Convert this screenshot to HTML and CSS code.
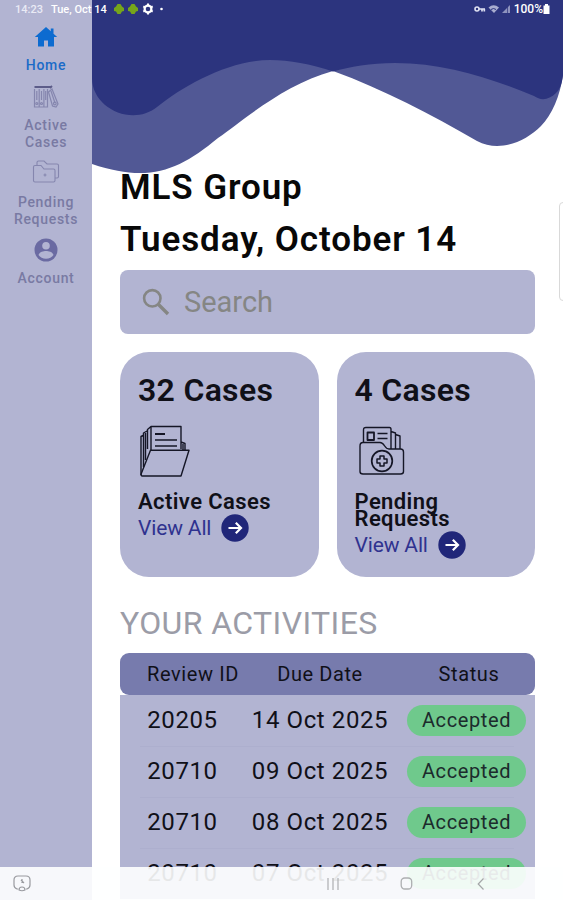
FILE: index.html
```html
<!DOCTYPE html>
<html lang="en">
<head>
<meta charset="utf-8">
<title>MLS Group</title>
<link rel="stylesheet" href="styles.css">
</head>
<body>
<div class="app">
  <nav class="sidebar">
    <a class="nav-item active">
      <svg class="ico-home" width="24" height="22" viewBox="0 0 24 22"><path d="M12 1 0.800 11H4v9.500h6v-6h4v6h6V11h3.200L19.500 7.700V2.500h-2.700v2.800z" fill="#0d6bd0"/></svg>
      <span>Home</span>
    </a>
    <a class="nav-item cases">
      <svg width="28" height="26" viewBox="0 0 28 26" fill="none" stroke="#8586ae" stroke-width="1.200"><path d="M2.500 3h17M20 2l-2 2" stroke="#5c5c89" stroke-width="1.800"/><path d="M2.500 5v18h4.700V5M7.200 5v18h4.700V5M11.900 5v18h3.600V5M4.800 7v9M9.500 7v9M13.700 7v9M16.500 8l3.500-3 6 15-2 3-3.500-1zM19 7l4 12"/><circle cx="4.800" cy="19.500" r="1"/><circle cx="9.500" cy="19.500" r="1"/><circle cx="22.800" cy="19.500" r="1.300"/></svg>
      <span>Active<br>Cases</span>
    </a>
    <a class="nav-item pending">
      <svg width="28" height="24" viewBox="0 0 28 24" fill="none" stroke="#8586ae" stroke-width="1.100"><path d="M1.500 7q0-1.500 1.500-1.500h6L12 9h9.500q1.500 0 1.500 1.500v10q0 1.500-1.500 1.500H3q-1.500 0-1.500-1.500zM5 5V2.500Q5 1 6.500 1H12l3 3h10q1.500 0 1.500 1.500v11q0 1.500-1.500 1.500h-1.500M13 13.500v3M11.500 15h3"/></svg>
      <span>Pending<br>Requests</span>
    </a>
    <a class="nav-item account">
      <svg width="24" height="24" viewBox="0 0 24 24"><circle cx="12" cy="12" r="11.500" fill="#6a6aa2"/><circle cx="12" cy="7.700" r="3.800" fill="#b2b4d2"/><path d="M4.500 17c1-3.200 5-4 7.500-4s6.500.8 7.500 4c-1.600 2.300-4.300 3.800-7.500 3.800S6.100 19.300 4.500 17z" fill="#b2b4d2"/></svg>
      <span>Account</span>
    </a>
  </nav>

  <main class="main">
    <svg class="wave" width="471" height="176" viewBox="92 0 471 176">
      <path d="M92 0H563V75C560 96 552 115 541 126C525 142 499 153 477 141C430 114 385 90 333 71C285 84 245 119 218 138C178 171 149 183 92 164Z" fill="#515895"/>
      <path d="M92 0H563V75C562 84 560 89 556 93C549 100 541 101 534 96C490 78 445 63 395 63C370 63 350 67 333 71.500C310 64 290 60 270 60C230 60 184 85 157 107C132 127 92 108 92 78Z" fill="#2c347e"/>
    </svg>
    <h1 class="title company">MLS Group</h1>
    <h1 class="title date">Tuesday, October 14</h1>

    <div class="search">
      <svg width="28" height="28" viewBox="0 0 28 28" fill="none" stroke="#858684" stroke-width="2.600"><circle cx="10.300" cy="10.300" r="8.200"/><path d="M16.500 16.500 26 26" stroke-width="3.400"/></svg>
      <span>Search</span>
    </div>

    <div class="cards">
      <section class="card">
        <h2>32 Cases</h2>
        <svg class="card-icon" width="52" height="54" viewBox="0 0 52 54" fill="none" stroke="#151626" stroke-width="1.400" stroke-linejoin="round"><path d="M3 50V11.500L6 10M5.500 42V8L9 6M9.500 24V4.500L13 1.500h30V24M13 2v23M7.500 8v27M43 17l4 1.500V25M45 19v6" /><path d="M12.500 25.300H51L43 51H4.500Q2.500 51 3.300 48.500z"/><path d="M17 9h10" stroke-width="2"/><path d="M17 15h22M17 21h22" stroke-width="1.600"/></svg>
        <h3>Active Cases</h3>
        <a class="view"><span>View All</span><svg width="28" height="28" viewBox="0 0 28 28"><circle cx="14" cy="14" r="13.700" fill="#202679"/><path d="M7.500 14h12M14.800 8.800l5.200 5.200-5.200 5.200" fill="none" stroke="#fff" stroke-width="2.200"/></svg></a>
      </section>
      <section class="card">
        <h2>4 Cases</h2>
        <svg class="card-icon" width="52" height="54" viewBox="0 0 52 54" fill="none" stroke="#151626" stroke-width="1.400" stroke-linejoin="round"><path d="M8.500 17V5Q8.500 2.500 11 2.500h23.500q1.500 0 1.500 2V24M36 6.500l4.500 1.500v16M40.500 9.500 45 11v13"/><path d="M5 21q0-3.500 3-3.500h17c5 0 4 6.500 9 6.500h11.500q3 0 3 3v19.500q0 2.500-3 2.500H8q-3 0-3-2.500z"/><rect x="12.500" y="7.500" width="6.500" height="7.500" stroke-width="1.800"/><path d="M22.500 8.500h10M22.500 13.500h10"/><circle cx="27" cy="36" r="10.300" stroke-width="1.700"/><path d="M25 31h4v3h3v4h-3v3h-4v-3h-3v-4h3z" stroke-width="1.500"/></svg>
        <h3>Pending<br>Requests</h3>
        <a class="view"><span>View All</span><svg width="28" height="28" viewBox="0 0 28 28"><circle cx="14" cy="14" r="13.700" fill="#202679"/><path d="M7.500 14h12M14.800 8.800l5.200 5.200-5.200 5.200" fill="none" stroke="#fff" stroke-width="2.200"/></svg></a>
      </section>
    </div>

    <h2 class="section-title">YOUR ACTIVITIES</h2>
    <div class="row head"><span class="id">Review ID</span><span>Due Date</span><span class="state">Status</span></div>
    <div class="rows">
      <div class="row"><span>20205</span><span>14 Oct 2025</span><b>Accepted</b></div>
      <div class="row"><span>20710</span><span>09 Oct 2025</span><b>Accepted</b></div>
      <div class="row"><span>20710</span><span>08 Oct 2025</span><b>Accepted</b></div>
      <div class="row"><span>20710</span><span>07 Oct 2025</span><b>Accepted</b></div>
    </div>
  </main>

  <header class="status">
    <span class="time">14:23</span><span class="day">Tue, Oct 14</span>
    <svg width="54" height="12" viewBox="0 0 54 12"><g fill="#76a51b"><path d="M1 5l2-1.500L4.500 1h3L9 3.500 11 5v3l-2 .5L7.500 11h-3L3 8.500 1 8z"/><path d="M15 5l2-1.500L18.500 1h3L23 3.500 25 5v3l-2 .5-1.500 2.500h-3L17 8.500 15 8z"/></g><circle cx="35" cy="6" r="3.400" fill="none" stroke="#fff" stroke-width="2.200"/><path d="M35 .6v2M35 9.400v2M30.300 3.300l1.700 1M38 7.700l1.700 1M30.300 8.700l1.700-1M38 4.300l1.700-1" stroke="#fff" stroke-width="2"/><circle cx="48.500" cy="6" r="1.300" fill="#fff"/></svg>
    <svg class="signal" width="38" height="12" viewBox="0 0 38 12" fill="none"><circle cx="3" cy="6" r="2" stroke="#dfe1f2" stroke-width="1.600"/><path d="M5 6h6M8 6v2.500M10.300 6v2.500" stroke="#dfe1f2" stroke-width="1.700"/><path d="M14.500 4.500q5-4.500 10.500 0L20 10z" fill="#a9add0"/><path d="M17 6.500q2.500-2 5 0" stroke="#2c347e"/><path d="M28 10h8V2z" fill="#8e93be"/><path d="M33.500 10V3" stroke="#2c347e" stroke-width=".7"/></svg>
    <span class="battery">100%</span>
    <svg width="7" height="12" viewBox="0 0 7 12"><path d="M.5 2.500H2V1h3v1.500h1.500V11h-6z" fill="#fff"/></svg>
  </header>

  <div class="edge-handle"></div>
  <footer class="system">
    <svg class="shot" width="18" height="17" viewBox="0 0 18 17" fill="none" stroke="#999a9f" stroke-width="1.200"><path d="M5 14H4q-3-1-3-4V5q0-4 4-4h8q4 0 4 4v5q0 3-3 4h-1M6 15q0-3 3-3t3 3q-3 1.500-6 0zM9 8V4M8 5l3 3"/></svg>
    <svg class="recent" width="12" height="12" viewBox="0 0 12 12" stroke="#adafb1" stroke-width="1.200"><path d="M1 0v12M6 0v12M11 0v12"/></svg>
    <svg class="homekey" width="13" height="13" viewBox="0 0 13 13" fill="none" stroke="#adafb1" stroke-width="1.300"><rect x="1.200" y="1" width="10.500" height="11" rx="3.500"/></svg>
    <svg class="back" width="8" height="12" viewBox="0 0 8 12" fill="none" stroke="#a4a6a8" stroke-width="1.200"><path d="M6.500 .5 1.200 6l5.300 5.500"/></svg>
  </footer>
</div>
</body>
</html>
```
FILE: styles.css
```css
* { box-sizing: border-box; }
body { margin: 0; background: #fff; font-family: Roboto, "Liberation Sans", sans-serif; color: #101018; }
h1, h2, h3 { margin: 0; font-weight: 500; }
svg { display: block; flex: none; }
.app { position: relative; width: 563px; height: 900px; overflow: hidden; display: flex; }

.sidebar { width: 92px; flex: none; background: #b2b4d2; padding-top: 26px; display: flex; flex-direction: column; align-items: center; }
.nav-item { display: flex; flex-direction: column; align-items: center; text-align: center; font-size: 14px; font-weight: 500; line-height: 17px; letter-spacing: .7px; color: #797aa3; }
.nav-item.active { color: #1a6bc8; height: 58px; }
.active span { margin-top: 9px; }
.cases { height: 75px; }
.cases span { margin-top: 7px; }
.pending { height: 79px; }
.pending svg { margin-top: 1px; }
.pending span { margin-top: 10px; }
.account span { margin-top: 8px; }

.main { width: 471px; flex: none; padding: 0 28px; }
.wave { position: relative; z-index: 1; margin: 0 -28px; }
.title { font-size: 35px; font-weight: 600; line-height: 52px; letter-spacing: .9px; color: #080808; white-space: nowrap; }
.company { margin-top: -14px; }
.search { height: 64px; margin-top: 4px; border-radius: 8px; background: #b2b4d2; display: flex; align-items: center; padding-left: 22px; gap: 14px; font-size: 29px; letter-spacing: 0; color: #858684; }

.cards { display: flex; gap: 18px; margin-top: 18px; }
.card { flex: 1; height: 225px; border-radius: 29px; background: #b2b4d2; padding: 18px 18px 0; }
.card h2 { font-size: 32px; font-weight: 600; line-height: 40px; letter-spacing: .3px; }
.card-icon { margin: 15px 0 0 0; }
.card h3 { font-size: 22px; font-weight: 600; line-height: 17px; letter-spacing: .4px; margin-top: 14px; }
.view { display: flex; align-items: center; gap: 10px; font-size: 21px; line-height: 28px; letter-spacing: -.15px; color: #2f328f; margin-top: 4px; }
.section-title { font-size: 32px; font-weight: 400; line-height: 40px; letter-spacing: .4px; margin-top: 26px; color: #9b9ca7; white-space: nowrap; }

.row { display: grid; grid-template-columns: 125px 150px 143px; align-items: center; justify-items: center; height: 51px; font-size: 24px; letter-spacing: .6px; white-space: nowrap; }
.row span { margin-top: -1px; }
.head { height: 42px; margin-top: 10px; border-radius: 9px; background: #777bad; font-size: 20px; }
.head span { margin-top: 0; }
.head .id { margin-left: 21px; }
.head .state { margin-left: 5px; }
.rows { background: #b2b4d2; }
.rows .row + .row { background: linear-gradient(#adafce, #adafce) 20px 0 / 374px 1px no-repeat; }
.row b { width: 119px; height: 31px; border-radius: 16px; background: #6fc98c; font-size: 20px; font-weight: 400; line-height: 30px; text-align: center; color: #1c2b2c; }

.status { position: absolute; z-index: 2; top: 0; left: 0; right: 0; height: 18px; padding: 0 13px 0 15px; display: flex; align-items: center; font-size: 11px; font-weight: 500; color: #fff; white-space: nowrap; }
.time { width: 36px; color: #e9eaf5; }
.day { width: 62px; }
.signal { margin-left: auto; margin-right: 2px; }
.battery { font-size: 12px; }
.edge-handle { position: absolute; right: -8px; top: 202px; width: 12px; height: 99px; border: 1px solid #d9d9d9; border-radius: 4px; background: #fff; }
.system { position: absolute; z-index: 3; left: 0; right: 0; bottom: 0; height: 33px; background: rgba(254, 255, 255, .9); display: flex; align-items: center; padding-left: 13px; }
.recent { margin-left: 296px; }
.homekey { margin-left: 61px; }
.back { margin-left: 64px; }
```
